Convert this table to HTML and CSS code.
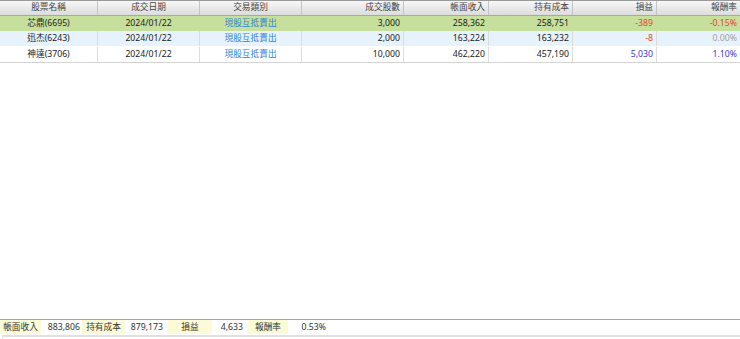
FILE: index.html
```html
<!DOCTYPE html>
<html lang="zh-Hant">
<head>
<meta charset="utf-8">
<link rel="stylesheet" href="styles.css">
</head>
<body>
<div class="page">
  <div class="grid">
    <div class="row head">
      <div class="c ctr">股票名稱</div>
      <div class="c ctr">成交日期</div>
      <div class="c ctr">交易類別</div>
      <div class="c rt">成交股數</div>
      <div class="c rt">帳面收入</div>
      <div class="c rt">持有成本</div>
      <div class="c rt">損益</div>
      <div class="c rt">報酬率</div>
    </div>
    <div class="row sel">
      <div class="c ctr">芯鼎(6695)</div>
      <div class="c ctr">2024/01/22</div>
      <div class="c ctr type">現股互抵賣出</div>
      <div class="c rt">3,000</div>
      <div class="c rt">258,362</div>
      <div class="c rt">258,751</div>
      <div class="c rt neg">-389</div>
      <div class="c rt neg">-0.15%</div>
    </div>
    <div class="row alt">
      <div class="c ctr">迅杰(6243)</div>
      <div class="c ctr">2024/01/22</div>
      <div class="c ctr type">現股互抵賣出</div>
      <div class="c rt">2,000</div>
      <div class="c rt">163,224</div>
      <div class="c rt">163,232</div>
      <div class="c rt neg">-8</div>
      <div class="c rt zero">0.00%</div>
    </div>
    <div class="row">
      <div class="c ctr">神達(3706)</div>
      <div class="c ctr">2024/01/22</div>
      <div class="c ctr type">現股互抵賣出</div>
      <div class="c rt">10,000</div>
      <div class="c rt">462,220</div>
      <div class="c rt">457,190</div>
      <div class="c rt pos">5,030</div>
      <div class="c rt pos">1.10%</div>
    </div>
  </div>
  <div class="spacer"></div>
  <div class="summary">
    <div class="lbl w41">帳面收入</div>
    <div class="val w41">883,806</div>
    <div class="lbl w43">持有成本</div>
    <div class="val w40">879,173</div>
    <div class="lbl w44 ml3">損益</div>
    <div class="val w33">4,633</div>
    <div class="lbl w40 ml3">報酬率</div>
    <div class="val w42">0.53%</div>
  </div>
  <div class="footer"></div>
</div>
</body>
</html>
```
FILE: styles.css
```css
html, body {
  margin: 0;
  padding: 0;
  background: #ffffff;
}
body {
  font-family: "Noto Sans", "Noto Sans CJK TC", sans-serif;
  font-size: 8.7px;
  color: #222;
}
.page {
  display: flex;
  flex-direction: column;
  height: 339px;
  overflow: hidden;
}
.grid {
  display: flex;
  flex-direction: column;
  border-bottom: 1px solid #d4d4d4;
}
.row {
  display: grid;
  grid-template-columns: 98px 102px 102px 102px 85px 84px 84px 83px;
  height: 15px;
  background: #ffffff;
}
.row .c {
  border-right: 1px solid #dcdcdc;
  line-height: 15px;
  white-space: nowrap;
  overflow: hidden;
}
.row .c:last-child { border-right: none; }
.head {
  background: linear-gradient(#f7f7f7, #dcdcdc);
  border-top: 1px solid #9a9a9a;
  border-bottom: 1px solid #a8a8a8;
  height: 14px;
  color: #444;
}
.head .c {
  line-height: 13px;
  border-right: 1px solid #c4c4c4;
}
.sel { background: #c6df9c; }
.sel .c { border-right-color: #c6df9c; }
.alt { background: #e7f3fc; border-bottom: 1px solid #ffffff; }
.ctr { text-align: center; }
.rt { text-align: right; padding-right: 3px; }
.type { color: #2f86d6; }
.neg { color: #e4462c; }
.zero { color: #a0a0a0; }
.pos { color: #3a3acc; }
.spacer { flex: 1; }
.summary {
  display: flex;
  height: 14px;
  border-top: 1px solid #a4a4a4;
  line-height: 14px;
  color: #333;
}
.lbl {
  background: #fbfbd8;
  text-align: center;
}
.val {
  text-align: right;
  padding-right: 2px;
  box-sizing: border-box;
}
.w33 { width: 33px; }
.w40 { width: 40px; }
.w41 { width: 41px; }
.w42 { width: 42px; padding-right: 4px; }
.w43 { width: 43px; }
.w44 { width: 44px; }
.ml3 { margin-left: 3px; }
.footer {
  margin-top: 1px;
  height: 2px;
  border-top: 2px solid #e0e0e0;
  border-left: 1px solid #e4e4e4;
  margin-left: 2px;
}
```
